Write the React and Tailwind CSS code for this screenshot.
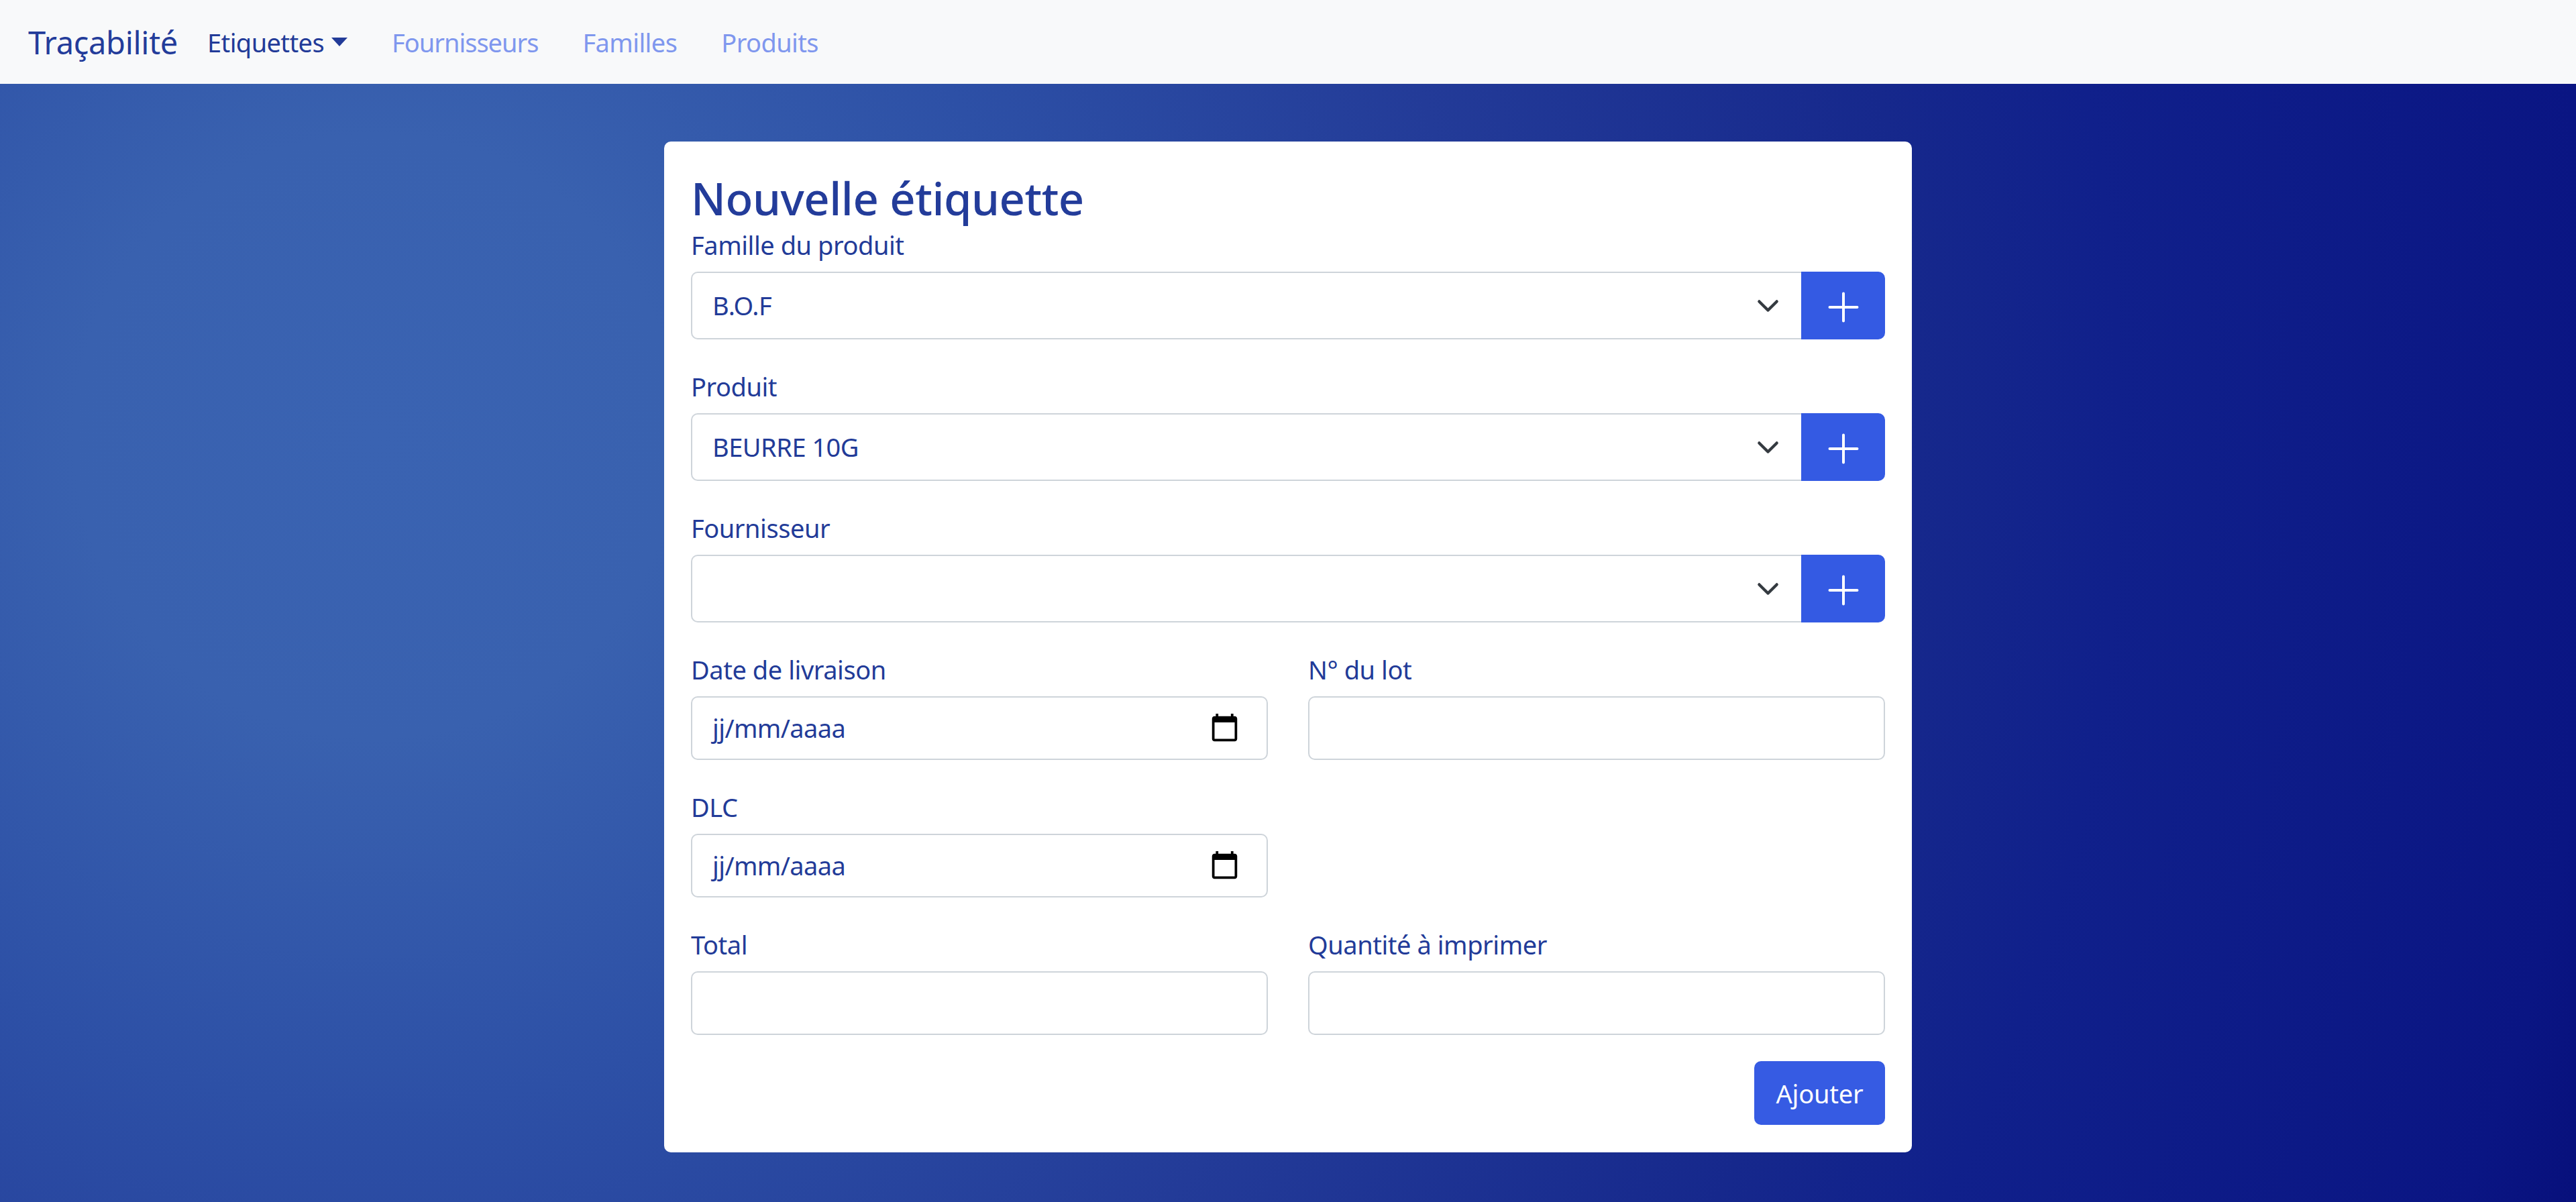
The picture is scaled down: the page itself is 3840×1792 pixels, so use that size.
const font = "font-['Noto_Sans',sans-serif]";

function Plus() {
  return (
    <svg viewBox="0 0 48 48" className="w-[48px] h-[48px] mt-[5px]" fill="none" stroke="white" strokeWidth="4" strokeLinecap="round">
      <path d="M24 3.5v41M3.5 24h41" />
    </svg>
  );
}

function Chevron() {
  return (
    <svg viewBox="0 0 16 16" className="absolute right-[32px] top-1/2 -translate-y-1/2 w-[35px] h-[35px] pointer-events-none" fill="none" stroke="#343a40" strokeWidth="2" strokeLinecap="round" strokeLinejoin="round">
      <path d="m2 5 6 6 6-6" />
    </svg>
  );
}

function Calendar() {
  return (
    <svg viewBox="0 0 24 24" className="w-[45px] h-[45px] mb-[3px]" fill="black">
      <path d="M20 3h-1V1h-2v2H7V1H5v2H4c-1.1 0-2 .9-2 2v16c0 1.1.9 2 2 2h16c1.1 0 2-.9 2-2V5c0-1.1-.9-2-2-2zm0 18H4V8h16v13z" />
    </svg>
  );
}

function Label({ children }) {
  return <div className="h-[60px] mb-[10px] text-[38px] leading-[61px] tracking-[-0.45px] text-[#223b98]">{children}</div>;
}

function SelectRow({ label, value }) {
  return (
    <div className="mb-[40px]">
      <Label>{label}</Label>
      <div className="flex h-[101px]">
        <div className="relative flex-1">
          <select defaultValue={value} className="w-full h-full appearance-none bg-white border-[2.5px] border-r-0 border-[#ced4da] rounded-l-[10px] pl-[30px] text-[38px] tracking-[-0.5px] text-[#223b98]">
            <option value={value}>{value}</option>
          </select>
          <Chevron />
        </div>
        <button className="w-[125px] flex items-center justify-center bg-[#345ae3] rounded-r-[10px]">
          <Plus />
        </button>
      </div>
    </div>
  );
}

function TextField({ label }) {
  return (
    <div>
      <Label>{label}</Label>
      <input className="block w-full h-[95px] bg-white border-[2.5px] border-[#ced4da] rounded-[10px] px-[30px] text-[38px] text-[#223b98]" />
    </div>
  );
}

function DateField({ label }) {
  return (
    <div>
      <Label>{label}</Label>
      <div className="flex items-center justify-between h-[95px] bg-white border-[2.5px] border-[#ced4da] rounded-[10px] pl-[30px] pr-[40px] text-[38px] tracking-[-0.6px] text-[#223b98]">
        <span>jj/mm/aaaa</span>
        <Calendar />
      </div>
    </div>
  );
}

export default function App() {
  return (
    <div className={`${font} h-[1792px] overflow-hidden bg-[radial-gradient(circle_at_560px_650px,#3a63b2_0,#3961af_450px,#2d50a6_1000px,#233b98_1640px,#16288c_2300px,#10208b_2600px,#0a1583_3320px,#070f7a_3500px)]`}>
      <nav className="h-[125px] pt-[2px] bg-[#f8f9fa] flex items-center pl-[42px]">
        <span className="text-[47px] tracking-[-0.3px] text-[#233c9a] mr-[44px]">Traçabilité</span>
        <div className="flex items-center gap-[66px] text-[38px] tracking-[-0.6px] text-[#7f97ee]">
          <span className="flex items-center text-[#223b98]">
            Etiquettes
            <span className="ml-[11px] mb-[3px] border-x-[12px] border-x-transparent border-t-[13px] border-t-[#223b98]" />
          </span>
          <span className="tracking-[-1px]">Fournisseurs</span>
          <span>Familles</span>
          <span>Produits</span>
        </div>
      </nav>
      <div className="w-[1860px] ml-[990px] mt-[86px] h-[1507px] bg-white rounded-[10px] pt-[40px] px-[40px]">
        <h2 className="h-[84px] text-[67px] leading-[88px] font-medium tracking-[-0.5px] text-[#233c9a]">Nouvelle étiquette</h2>
        <SelectRow label="Famille du produit" value="B.O.F" />
        <SelectRow label="Produit" value="BEURRE 10G" />
        <SelectRow label="Fournisseur" value="" />
        <div className="grid grid-cols-2 gap-x-[60px] gap-y-[40px]">
          <DateField label="Date de livraison" />
          <TextField label="N° du lot" />
          <DateField label="DLC" />
          <div />
          <TextField label="Total" />
          <TextField label="Quantité à imprimer" />
        </div>
        <div className="flex justify-end mt-[39px]">
          <button className="w-[195px] h-[95px] pt-[2px] bg-[#365be3] rounded-[10px] text-[38px] text-white tracking-[-0.2px]">Ajouter</button>
        </div>
      </div>
    </div>
  );
}
